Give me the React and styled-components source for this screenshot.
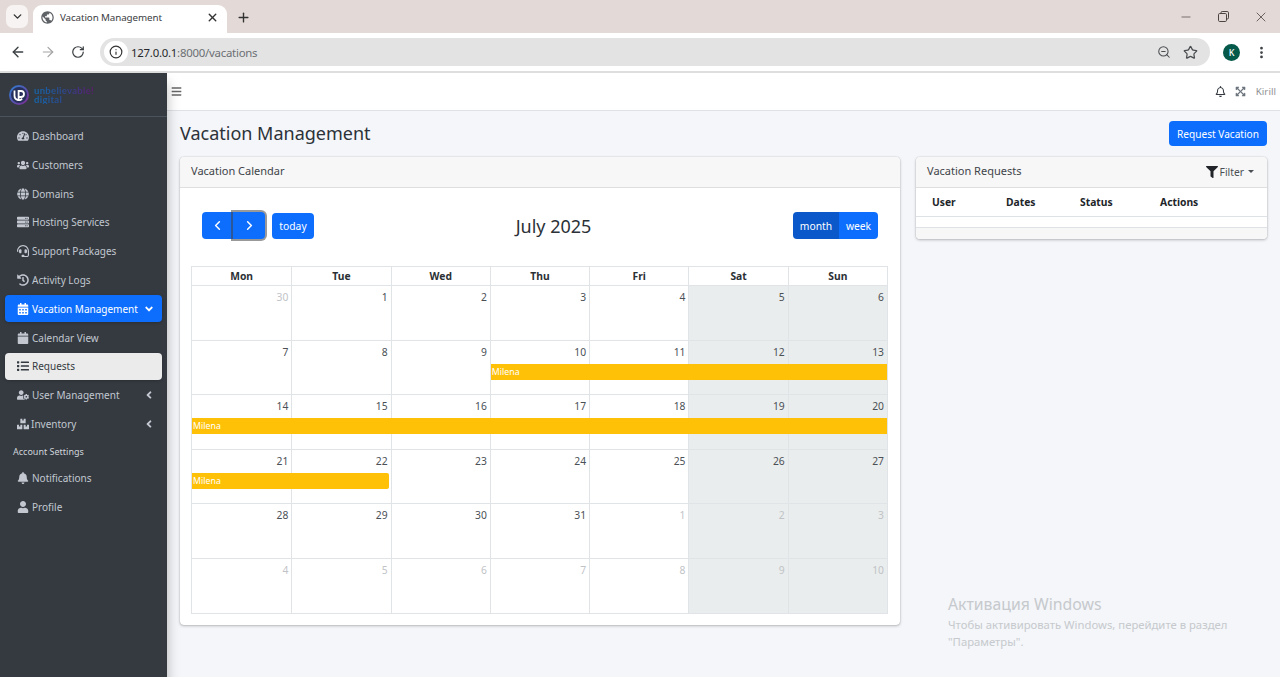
import React from 'react';
import styled, { createGlobalStyle } from 'styled-components';
import { ArrowLeft, ArrowRight, RotateCw, Info, ZoomOut, Star, ChevronDown, ChevronLeft, ChevronRight, X, Plus, Minus, EllipsisVertical } from 'lucide-react';
import { MdPublic } from 'react-icons/md';
import {
  FaTachometerAlt, FaUsers, FaGlobe, FaServer, FaHeadset, FaHistory, FaCalendarAlt, FaCalendar, FaList,
  FaUserCog, FaBoxes, FaBell, FaUser, FaAngleDown, FaAngleLeft, FaFilter, FaBars, FaRegBell, FaExpandArrowsAlt,
} from 'react-icons/fa';

const Global = createGlobalStyle`
  html, body { margin: 0; padding: 0; height: 677px; overflow: hidden; background: #f4f6f9; }
  * { box-sizing: border-box; }
  body { font-family: "Noto Sans", "Open Sans", sans-serif; color: #212529; }
`;

const Page = styled.div`
  position: relative; width: 1280px; height: 677px; display: flex; flex-direction: column; overflow: hidden;
`;
const TabStrip = styled.div`
  height: 33px; flex: none; background: #e3dad7; display: flex; align-items: flex-end; padding-left: 6px; color: #333;
`;
const TabMenu = styled.div`
  width: 22px; height: 23px; margin-bottom: 5px; background: #f7f3f2; border-radius: 7px; display: flex; align-items: center; justify-content: center;
`;
const Tab = styled.div`
  width: 194px; height: 28px; margin-left: 5px; background: #fff; border-radius: 9px 9px 0 0; display: flex; align-items: center; padding: 0 8px 4px 7px; font-size: 9.8px; letter-spacing: -.1px; color: #3c4043;
  span { margin-left: 5px; flex: 1; }
`;
const NewTab = styled.div`
  width: 18px; margin: 0 0 7px 7px; height: 18px; display: flex; align-items: center; justify-content: center;
`;
const WindowControls = styled.div`
  margin-left: auto; align-self: flex-start; display: flex; align-items: center; gap: 24.5px; height: 33px; padding-right: 11px; color: #4a4442;
`;
const Toolbar = styled.div`
  height: 38px; flex: none; background: #fff; display: flex; align-items: center; padding-left: 10px; color: #3c4043;
`;
const ToolIcon = styled.div`
  width: 16px; height: 16px; margin-left: ${p => p.$ml || 0}px; margin-right: ${p => p.$gap ?? 14}px; display: flex; align-items: center; justify-content: center; color: ${p => p.$dim ? '#a3a3a3' : 'inherit'};
`;
const Address = styled.div`
  width: 1110px; height: 28px; background: #e3e3e3; border-radius: 14px; display: flex; align-items: center; padding: 0 12px 0 4px; font-size: 11.4px; letter-spacing: -.24px; color: #6b6f73;
  b { font-weight: 400; color: #26292c; }
`;
const InfoDot = styled.div`
  width: 24px; height: 22px; border-radius: 11px; background: #fff; display: flex; align-items: center; justify-content: center; margin-right: 3px; color: #333;
`;
const AddressRight = styled.div`
  margin-left: auto; display: flex; align-items: center; gap: 12px; color: #4a4d50;
`;
const Avatar = styled.div`
  width: 17px; height: 17px; border-radius: 50%; background: #04594a; color: #fff; font-size: 9px; font-weight: 500; margin-left: 13px; display: flex; align-items: center; justify-content: center;
`;
const ChromeLine = styled.div`
  height: 2px; flex: none; background: #dedede;
`;
const Body = styled.div`
  flex: 1; display: flex; min-height: 0;
`;
const Sidebar = styled.aside`
  width: 167px; flex: none; background: #343a40; box-shadow: 0 10px 12px rgba(0,0,0,.28); position: relative; z-index: 2; color: #c2c7d0;
`;
const Brand = styled.div`
  height: 44px; display: flex; align-items: center; padding: 0 0 0 9px; border-bottom: 1px solid #4b545c;
`;
const BrandText = styled.div`
  margin-left: 5px; font-size: 9.5px; line-height: 9px; font-weight: 700; letter-spacing: .3px; font-family: "Lato", sans-serif;
  background: linear-gradient(90deg, #1567ac 0%, #2a4c92 45%, #5e1b6e 100%); -webkit-background-clip: text; background-clip: text; color: transparent;
`;
const Nav = styled.nav`
  padding: 5.5px 5px 0;
`;
const Item = styled.div`
  height: 27px; margin-bottom: 1.8px; border-radius: 4px; display: flex; align-items: center; padding-left: 12px; font-size: 10px;
  background: ${p => p.$active ? '#0d6efd' : p.$light ? 'rgba(255,255,255,.9)' : 'transparent'};
  color: ${p => p.$active ? '#fff' : p.$light ? '#343a40' : '#c2c7d0'};
  box-shadow: ${p => p.$active || p.$light ? '0 1px 3px rgba(0,0,0,.2)' : 'none'};
`;
const ItemIcon = styled.span`
  width: 15px; flex: none; display: flex; align-items: center; justify-content: flex-start;
  svg { width: 12px; height: 12px; }
`;
const ItemLabel = styled.span`
  margin-left: ${p => p.$ml ?? 0}px; flex: 1; white-space: nowrap;
`;
const ItemArrow = styled.span`
  width: 12px; margin-right: 7px; display: flex; align-items: center; justify-content: center;
`;
const NavHeader = styled.div`
  height: 25.1px; padding-left: 8px; display: flex; align-items: center; font-size: 9px; color: #d0d4db;
`;
const Main = styled.main`
  flex: 1; min-width: 0; display: flex; flex-direction: column;
`;
const TopBar = styled.div`
  height: 38px; flex: none; background: #fff; border-bottom: 1px solid #dee2e6; display: flex; align-items: center; padding: 0 4px; color: rgba(0,0,0,.6);
`;
const TopRight = styled.div`
  margin-left: auto; display: flex; align-items: center; gap: 9.5px; font-size: 9.8px; color: #8f9194;
`;
const Content = styled.div`
  padding: 10px 13px 0;
`;
const TitleRow = styled.div`
  height: 25px; display: flex; align-items: center; justify-content: space-between;
`;
const Title = styled.h1`
  margin: 0; font-size: 18px; font-weight: 400; line-height: 25px; color: #2c3238;
`;
const PrimaryButton = styled.button`
  border: 0; background: #0d6efd; color: #fff; border-radius: 4px; font: inherit; font-size: 10.1px; height: 25px; width: 98px; padding: 0; display: flex; align-items: center; justify-content: center;
`;
const Columns = styled.div`
  display: flex; gap: 16px; margin-top: 11px; align-items: flex-start;
`;
const Card = styled.section`
  width: ${p => p.$w}px; flex: none; background: #fff; border-radius: 4px; box-shadow: 0 0 1px rgba(0,0,0,.3), 0 1px 3px rgba(0,0,0,.25);
`;
const CardHeader = styled.div`
  height: 31px; display: flex; align-items: center; justify-content: space-between; padding: 0 11px 4px; background: #f7f7f7; border-bottom: 1px solid #dfdfdf; border-radius: 4px 4px 0 0; font-size: 11px; color: #3e444a;
`;
const CalBody = styled.div`
  padding: 24px 11px 11px;
`;
const CalToolbar = styled.div`
  display: flex; align-items: center; justify-content: space-between; height: 27px; padding: 0 11px; margin-bottom: 27px;
`;
const Group = styled.div`
  display: flex; align-items: center;
`;
const CalTitle = styled.div`
  font-size: 18px; color: #2b3137;
`;
const CalBtn = styled.button`
  border: 0; padding: 0; font: inherit; font-size: 10.3px; color: #fff; height: ${p => p.$h || 27}px; width: ${p => p.$w}px; margin-left: ${p => p.$ml || 0}px;
  background: ${p => p.$on ? '#0a58ca' : '#0d6efd'};
  border-radius: ${p => p.$r || '4px'};
  display: flex; align-items: center; justify-content: center;
  box-shadow: ${p => p.$focus ? '0 0 0 2px rgba(70,70,70,.55)' : 'none'};
  position: relative; z-index: ${p => p.$focus ? 1 : 0};
`;
const Cal = styled.div`
  width: 697px; border: 1px solid #e1e4e7;
`;
const DayHead = styled.div`
  display: grid; grid-template-columns: repeat(7, 1fr); height: 19px; border-bottom: 1px solid #e1e4e7;
`;
const DayName = styled.div`
  display: flex; align-items: center; justify-content: center; font-size: 10.3px; font-weight: 700; color: #2b3035; border-left: ${p => p.$first ? '0' : '1px solid #e1e4e7'};
`;
const Week = styled.div`
  display: grid; grid-template-columns: repeat(7, 1fr); grid-template-rows: 1fr; border-bottom: ${p => p.$last ? '0' : '1px solid #e1e4e7'};
  height: 54.5px;
`;
const DayCell = styled.div`
  grid-row: 1; grid-column: ${p => p.$col}; background: ${p => p.$weekend ? '#eaeded' : '#fff'}; border-left: ${p => p.$col === 1 ? '0' : '1px solid #e1e4e7'}; text-align: right; padding: 4px 3px 0 0; font-size: 10.3px; line-height: 14px; color: ${p => p.$muted ? '#bfc3c7' : '#4a5056'};
`;
const EventBar = styled.div`
  grid-row: 1; grid-column: ${p => p.$from} / ${p => p.$to}; align-self: start; margin: 23px ${p => p.$end ? 1.5 : 0}px 0 ${p => p.$inset ? 1 : 0}px; height: 16px; z-index: 1; background: #ffc107; color: #fff; font-size: 8.8px; line-height: 17px; padding-left: 1px; border-radius: ${p => p.$end ? '0 2px 2px 0' : '0'};
`;
const Requests = styled.div`
  font-size: 10.3px; color: #212529;
`;
const ReqHead = styled.div`
  display: grid; grid-template-columns: 74px 74px 80px 1fr; padding-left: 16px; height: 29px; align-items: center; font-weight: 700; border-bottom: 1px solid #dee2e6; color: #212529;
`;
const ReqRow = styled.div`
  height: 11px; border-bottom: 1px solid #dee2e6;
`;
const ReqFoot = styled.div`
  height: 11px; background: #f7f7f7; border-radius: 0 0 4px 4px;
`;
const FilterBtn = styled.div`
  display: flex; align-items: center; font-size: 10.3px; color: #4a4f54; padding-right: 2px; margin-top: 3px;
  svg { margin-right: 2px; color: #212529; }
`;
const Caret = styled.span`
  width: 0; height: 0; margin-left: 4px; border-left: 3px solid transparent; border-right: 3px solid transparent; border-top: 3px solid #4a4f54;
`;
const Watermark = styled.div`
  position: absolute; left: 948px; top: 595px; color: #c6c9cd; font-size: 11.3px; line-height: 17px; z-index: 3;
  div:first-child { font-size: 15.8px; line-height: 19px; margin-bottom: 2px; }
`;

const navItems = [
  [FaTachometerAlt, 'Dashboard'], [FaUsers, 'Customers'], [FaGlobe, 'Domains'], [FaServer, 'Hosting Services'],
  [FaHeadset, 'Support Packages'], [FaHistory, 'Activity Logs'],
];

const weeks = [
  [[30, 1], [1], [2], [3], [4], [5], [6]],
  [[7], [8], [9], [10], [11], [12], [13]],
  [[14], [15], [16], [17], [18], [19], [20]],
  [[21], [22], [23], [24], [25], [26], [27]],
  [[28], [29], [30], [31], [1, 1], [2, 1], [3, 1]],
  [[4, 1], [5, 1], [6, 1], [7, 1], [8, 1], [9, 1], [10, 1]],
];
const events = { 1: { from: 4, to: 8, inset: true }, 2: { from: 1, to: 8 }, 3: { from: 1, to: 3, end: true } };

const Logo = () => (
  <svg width="20" height="20" viewBox="0 0 20 20">
    <defs>
      <linearGradient id="lg" x1="0" y1="0" x2="1" y2="1">
        <stop offset="0" stopColor="#2f7fd2" /><stop offset="1" stopColor="#7d2b90" />
      </linearGradient>
    </defs>
    <circle cx="10" cy="10" r="9" fill="#26305a" stroke="url(#lg)" strokeWidth="2" />
    <path d="M5.5 5.5V11a4.3 4.3 0 0 0 7.6 2.6" fill="none" stroke="#fff" strokeWidth="1.8" />
    <path d="M9.6 16V6h2.4a3 3 0 0 1 0 6H9.6" fill="none" stroke="#fff" strokeWidth="1.8" />
  </svg>
);
const Restore = () => (
  <svg width="11" height="11" viewBox="0 0 11 11" fill="none" stroke="currentColor" strokeWidth="1">
    <rect x="0.5" y="2.5" width="8" height="8" rx="1.2" />
    <path d="M3 2.5V1.7A1.2 1.2 0 0 1 4.2.5h5A1.3 1.3 0 0 1 10.5 1.8v5A1.2 1.2 0 0 1 9.3 8H8.5" />
  </svg>
);

export default function App() {
  return (
    <Page>
      <Global />
      <TabStrip>
        <TabMenu><ChevronDown size={13} strokeWidth={2.6} /></TabMenu>
        <Tab>
          <MdPublic size={15} color="#5f6368" />
          <span>Vacation Management</span>
          <X size={13} strokeWidth={2.6} color="#333" />
        </Tab>
        <NewTab><Plus size={15} strokeWidth={2.2} /></NewTab>
        <WindowControls>
          <Minus size={14} strokeWidth={1.2} />
          <Restore />
          <X size={16} strokeWidth={1.2} />
        </WindowControls>
      </TabStrip>
      <Toolbar>
        <ToolIcon><ArrowLeft size={16} strokeWidth={2.1} /></ToolIcon>
        <ToolIcon $dim><ArrowRight size={16} strokeWidth={1.8} /></ToolIcon>
        <ToolIcon><RotateCw size={14} strokeWidth={2.1} /></ToolIcon>
        <Address>
          <InfoDot><Info size={14} strokeWidth={2} /></InfoDot>
          <span><b>127.0.0.1</b>:8000/vacations</span>
          <AddressRight>
            <ZoomOut size={14} strokeWidth={1.8} />
            <Star size={15} strokeWidth={2} />
          </AddressRight>
        </Address>
        <Avatar>K</Avatar>
        <ToolIcon $ml={13} $gap={0}><EllipsisVertical size={15} strokeWidth={2.4} /></ToolIcon>
      </Toolbar>
      <ChromeLine />
      <Body>
        <Sidebar>
          <Brand>
            <Logo />
            <BrandText>unbelievable!<br />digital</BrandText>
          </Brand>
          <Nav>
            {navItems.map(([I, t]) => (
              <Item key={t}><ItemIcon><I /></ItemIcon><ItemLabel>{t}</ItemLabel></Item>
            ))}
            <Item $active>
              <ItemIcon><FaCalendarAlt /></ItemIcon>
              <ItemLabel>Vacation Management</ItemLabel>
              <ItemArrow><FaAngleDown size={12} /></ItemArrow>
            </Item>
            <Item><ItemIcon><FaCalendar /></ItemIcon><ItemLabel>Calendar View</ItemLabel></Item>
            <Item $light><ItemIcon><FaList /></ItemIcon><ItemLabel>Requests</ItemLabel></Item>
            <Item>
              <ItemIcon><FaUserCog /></ItemIcon>
              <ItemLabel>User Management</ItemLabel>
              <ItemArrow><FaAngleLeft size={12} /></ItemArrow>
            </Item>
            <Item>
              <ItemIcon><FaBoxes /></ItemIcon>
              <ItemLabel $ml={-1}>Inventory</ItemLabel>
              <ItemArrow><FaAngleLeft size={12} /></ItemArrow>
            </Item>
            <NavHeader>Account Settings</NavHeader>
            <Item><ItemIcon><FaBell /></ItemIcon><ItemLabel>Notifications</ItemLabel></Item>
            <Item><ItemIcon><FaUser /></ItemIcon><ItemLabel>Profile</ItemLabel></Item>
          </Nav>
        </Sidebar>
        <Main>
          <TopBar>
            <FaBars size={11} />
            <TopRight>
              <FaRegBell size={11} color="#343a40" />
              <FaExpandArrowsAlt size={11} color="#6c757d" />
              <span>Kirill</span>
            </TopRight>
          </TopBar>
          <Content>
            <TitleRow>
              <Title>Vacation Management</Title>
              <PrimaryButton>Request Vacation</PrimaryButton>
            </TitleRow>
            <Columns>
              <Card $w={720}>
                <CardHeader>Vacation Calendar</CardHeader>
                <CalBody>
                  <CalToolbar>
                    <Group>
                      <CalBtn $w={31} $r="4px 0 0 4px"><ChevronLeft size={15} strokeWidth={2.4} /></CalBtn>
                      <CalBtn $w={32} $r="0 4px 4px 0" $focus><ChevronRight size={15} strokeWidth={2.4} /></CalBtn>
                      <CalBtn $w={42} $h={26} $ml={7}>today</CalBtn>
                    </Group>
                    <CalTitle>July 2025</CalTitle>
                    <Group>
                      <CalBtn $w={46} $on $r="4px 0 0 4px">month</CalBtn>
                      <CalBtn $w={39} $r="0 4px 4px 0">week</CalBtn>
                    </Group>
                  </CalToolbar>
                  <Cal>
                    <DayHead>
                      {['Mon', 'Tue', 'Wed', 'Thu', 'Fri', 'Sat', 'Sun'].map((d, i) => (
                        <DayName key={d} $first={i === 0}>{d}</DayName>
                      ))}
                    </DayHead>
                    {weeks.map((w, wi) => (
                      <Week key={wi} $last={wi === weeks.length - 1}>
                        {w.map(([n, m], i) => (
                          <DayCell key={i} $col={i + 1} $weekend={i > 4} $muted={!!m}>{n}</DayCell>
                        ))}
                        {events[wi] && (
                          <EventBar $from={events[wi].from} $to={events[wi].to} $end={events[wi].end} $inset={events[wi].inset}>Milena</EventBar>
                        )}
                      </Week>
                    ))}
                  </Cal>
                </CalBody>
              </Card>
              <Card $w={351}>
                <CardHeader>
                  Vacation Requests
                  <FilterBtn><FaFilter size={12} />Filter<Caret /></FilterBtn>
                </CardHeader>
                <Requests>
                  <ReqHead><span>User</span><span>Dates</span><span>Status</span><span>Actions</span></ReqHead>
                  <ReqRow />
                  <ReqFoot />
                </Requests>
              </Card>
            </Columns>
          </Content>
        </Main>
      </Body>
      <Watermark>
        <div>Активация Windows</div>
        <div>Чтобы активировать Windows, перейдите в раздел</div>
        <div>"Параметры".</div>
      </Watermark>
    </Page>
  );
}
